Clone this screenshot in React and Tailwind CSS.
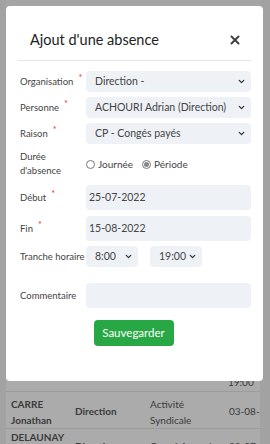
import { ChevronDown, X } from "lucide-react";

const Req = () => <span className="text-[#e3342f] text-[9px] relative -top-[4px] ml-[5px]">*</span>;

const Label = ({ children, req }) => (
  <div className="w-[68px] shrink-0 pl-[2px] text-[9.5px] leading-[14px] text-[#444] whitespace-nowrap">
    {children}
    {req && <Req />}
  </div>
);

const Select = ({ value, className = "" }) => (
  <div className={`h-[21px] bg-[#eef2f7] rounded-[4px] flex items-center justify-between pl-[9px] pr-[5px] text-[10.5px] text-[#444] ${className}`}>
    <span className="whitespace-nowrap">{value}</span>
    <ChevronDown size={9} strokeWidth={3.5} className="text-[#333] shrink-0" />
  </div>
);

const Input = ({ value }) => (
  <div className="h-[25px] flex-1 bg-[#eef2f7] rounded-[4px] flex items-center pl-[3px] text-[10.5px] text-[#444]">
    {value}
  </div>
);

const Radio = ({ checked, label }) => (
  <label className="flex items-center gap-[3px] text-[10px] text-[#444]">
    <span className="w-[9px] h-[9px] rounded-full border border-[#777] flex items-center justify-center">
      {checked && <span className="w-[5px] h-[5px] rounded-full bg-[#888]" />}
    </span>
    {label}
  </label>
);

export default function App() {
  return (
    <div className="relative w-[270px] h-[444px] overflow-hidden bg-[#a2a2a2] font-['Lato',sans-serif]">
      {/* page behind the backdrop */}
      <div className="flex h-full">
        <div className="w-[6px] shrink-0" />
        <div className="w-[254px] shrink-0 bg-[#ababab] flex flex-col overflow-hidden text-[10px] text-[#3a3a3a]">
          <div className="h-[38px] bg-[#a5a5a5]" />
          <div className="flex-1" />
          <div className="h-[15px] flex">
            <div className="ml-[222px] leading-[12px]">19:00</div>
          </div>
          <div className="h-[37px] border-t border-[#9c9c9c] flex items-center pt-[3px] whitespace-nowrap">
            <div className="w-[69px] shrink-0 pl-[5px] font-bold leading-[16px]">CARRE<br />Jonathan</div>
            <div className="w-[75px] shrink-0 font-bold">Direction</div>
            <div className="w-[79px] shrink-0 leading-[16px]">Activité<br />Syndicale</div>
            <div className="shrink-0">03-08-2022</div>
          </div>
          <div className="h-[16px] border-t border-[#9c9c9c] flex items-start pt-[2px] whitespace-nowrap leading-[12px]">
            <div className="w-[69px] shrink-0 pl-[5px] font-bold">DELAUNAY</div>
            <div className="w-[75px] shrink-0 font-bold mt-[9px]">Direction</div>
            <div className="w-[79px] shrink-0 mt-[9px]">Congé Annuel</div>
            <div className="shrink-0 mt-[9px]">03-07-2022</div>
          </div>
        </div>
      </div>

      {/* modal */}
      <div className="absolute left-[6px] top-[6px] w-[257px] h-[375px] bg-white rounded-[4px] px-[12px]">
        <div className="h-[55px] border-b border-[#e6e6e6] flex items-center justify-between pt-[13px] pl-[12px] pr-[9px]">
          <h2 className="text-[14.5px] text-[#222]">Ajout d'une absence</h2>
          <X size={14} strokeWidth={3.5} className="text-[#444]" />
        </div>

        <div className="flex flex-col">
          <div className="flex items-center mt-[10px]">
            <Label req>Organisation</Label>
            <Select value="Direction -" className="flex-1" />
          </div>
          <div className="flex items-center mt-[5px]">
            <Label req>Personne</Label>
            <Select value="ACHOURI Adrian (Direction)" className="flex-1" />
          </div>
          <div className="flex items-center mt-[5px]">
            <Label req>Raison</Label>
            <Select value="CP - Congés payés" className="flex-1" />
          </div>
          <div className="flex items-center mt-[6px]">
            <Label>Durée<br />d'absence</Label>
            <div className="flex gap-[9px]">
              <Radio label="Journée" />
              <Radio checked label="Période" />
            </div>
          </div>
          <div className="flex items-center mt-[7px]">
            <Label req>Début</Label>
            <Input value="25-07-2022" />
          </div>
          <div className="flex items-center mt-[6px]">
            <Label req>Fin</Label>
            <Input value="15-08-2022" />
          </div>
          <div className="flex items-center mt-[5px]">
            <Label>Tranche horaire</Label>
            <Select value="8:00" className="w-[52px]" />
            <Select value="19:00" className="w-[52px] ml-[12px]" />
          </div>
          <div className="flex items-center mt-[16px]">
            <Label>Commentaire</Label>
            <Input value="" />
          </div>
          <div className="flex justify-center mt-[12px] pr-[2px]">
            <button className="h-[26px] w-[80px] rounded-[4px] bg-[#28a745] text-white text-[11.5px]">Sauvegarder</button>
          </div>
        </div>
      </div>
    </div>
  );
}
